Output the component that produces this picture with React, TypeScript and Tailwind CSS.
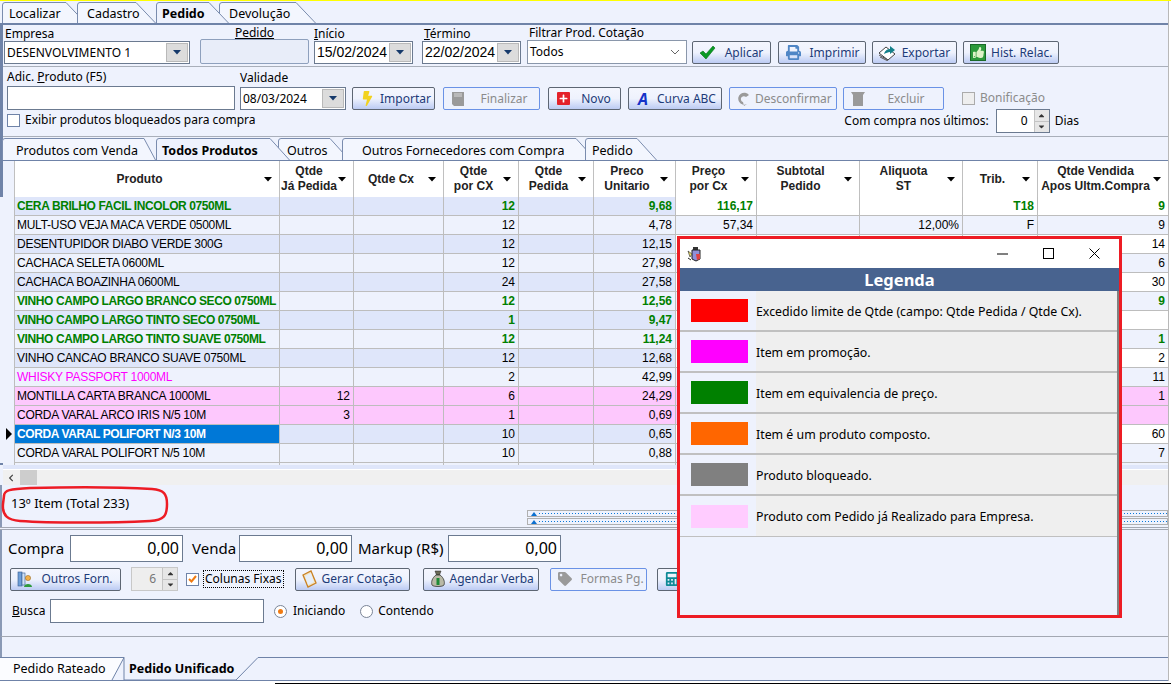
import React from "react";
import { FaPrint, FaBolt, FaThumbsUp, FaPlus, FaTag, FaCalculator, FaChevronLeft, FaCaretUp, FaCaretDown } from "react-icons/fa";

const gridCols = "grid grid-cols-[14px_265px_74px_90px_75px_75px_82px_81px_103px_103px_75px_131px]";

type Row = { name: string; a?: string; porCx: string; unit: string; cx?: string; al?: string; trib?: string; vend?: string; kind?: "green" | "promo" | "pink" | "sel" };

const rows: Row[] = [
  { name: "CERA BRILHO FACIL INCOLOR 0750ML", porCx: "12", unit: "9,68", cx: "116,17", trib: "T18", vend: "9", kind: "green" },
  { name: "MULT-USO VEJA MACA VERDE 0500ML", porCx: "12", unit: "4,78", cx: "57,34", al: "12,00%", trib: "F", vend: "9" },
  { name: "DESENTUPIDOR DIABO VERDE 300G", porCx: "12", unit: "12,15", vend: "14" },
  { name: "CACHACA SELETA 0600ML", porCx: "12", unit: "27,98", vend: "6" },
  { name: "CACHACA BOAZINHA 0600ML", porCx: "24", unit: "27,58", vend: "30" },
  { name: "VINHO CAMPO LARGO BRANCO SECO 0750ML", porCx: "12", unit: "12,56", vend: "9", kind: "green" },
  { name: "VINHO CAMPO LARGO TINTO SECO 0750ML", porCx: "1", unit: "9,47", kind: "green" },
  { name: "VINHO CAMPO LARGO TINTO SUAVE 0750ML", porCx: "12", unit: "11,24", vend: "1", kind: "green" },
  { name: "VINHO CANCAO BRANCO SUAVE 0750ML", porCx: "12", unit: "12,68", vend: "2" },
  { name: "WHISKY PASSPORT 1000ML", porCx: "2", unit: "42,99", vend: "11", kind: "promo" },
  { name: "MONTILLA CARTA BRANCA 1000ML", a: "12", porCx: "6", unit: "24,29", vend: "1", kind: "pink" },
  { name: "CORDA VARAL ARCO IRIS N/5 10M", a: "3", porCx: "1", unit: "0,69", kind: "pink" },
  { name: "CORDA VARAL POLIFORT N/3 10M", porCx: "10", unit: "0,65", vend: "60", kind: "sel" },
  { name: "CORDA VARAL POLIFORT N/5 10M", porCx: "10", unit: "0,88", vend: "7" },
];

const headers = [
  ["Produto"], ["Qtde", "Já Pedida"], ["Qtde Cx"], ["Qtde", "por CX"], ["Qtde", "Pedida"], ["Preco", "Unitario"],
  ["Preço", "por Cx"], ["Subtotal", "Pedido"], ["Aliquota", "ST"], ["Trib."], ["Qtde Vendida", "Apos Ultm.Compra"],
];

const legend = [
  ["bg-[#ff0000]", "Excedido limite de Qtde (campo: Qtde Pedida / Qtde Cx)."],
  ["bg-[#ff00ff]", "Item em promoção."],
  ["bg-[#008000]", "Item em equivalencia de preço."],
  ["bg-[#ff6600]", "Item é um produto composto."],
  ["bg-[#808080]", "Produto bloqueado."],
  ["bg-[#ffccff]", "Produto com Pedido já Realizado para Empresa."],
];

function Tab({ w, run = 20, label, textX, active, className = "", h = 23, top = 5 }: { w: number; run?: number; label: string; textX: number; active?: boolean; className?: string; h?: number; top?: number }) {
  const d = `M0.5,${h} L0.5,4 Q0.5,1.5 3,1.5 L${w - run},1.5 L${w - 0.5},${h}`;
  return (
    <div className={`relative shrink-0 ${active ? "z-10 font-bold" : ""} ${className}`} style={{ width: w, height: h }}>
      <svg className="absolute inset-0" width={w} height={h}>
        <path d={d} fill={active ? "#eef2fd" : "#f3f6fe"} stroke="#7a8cae" />
      </svg>
      <span className="absolute text-[12.5px] leading-[18px] whitespace-nowrap" style={{ left: textX, top }}>{label}</span>
    </div>
  );
}

function Arrow({ dark }: { dark?: boolean }) {
  return (
    <svg width="8" height="5" className="shrink-0"><path d="M0,0 H8 L4,4.5 Z" fill={dark ? "#000" : "#163a6b"} /></svg>
  );
}

function Combo({ text, className, big }: { text: string; className: string; big?: boolean }) {
  return (
    <div className={`flex items-center bg-white border border-[#6b7a90] pl-0.5 ${className}`}>
      <span className={`flex-1 whitespace-nowrap ${big ? "text-[14px] [font-family:'Liberation_Sans',sans-serif]" : "text-[12px]"}`}>{text}</span>
      <span className="flex items-center justify-center w-[22px] h-[calc(100%-2px)] mr-px bg-[#dcdcdc] border border-[#b9b9b9]">
        <Arrow />
      </span>
    </div>
  );
}

function Btn({ icon, label, className, off, tx = "justify-center" }: { icon: React.ReactNode; label: string; className: string; off?: boolean; tx?: string }) {
  return (
    <div
      className={`flex items-center h-[23px] gap-[7px] px-[5px] rounded-[2px] shrink-0 text-[12px] whitespace-nowrap ${
        off
          ? "border border-[#6a92e6] bg-[#eef2fd] text-[#8b8b8b]"
          : "border border-[#5d6673] bg-gradient-to-b from-[#f4f6fe] via-[#eef2fd] to-[#bccbf3] text-[#1d3b78]"
      } ${className}`}
    >
      <span className="w-[18px] flex justify-center shrink-0">{icon}</span>
      <span className={`flex-1 flex ${tx}`}>{label}</span>
    </div>
  );
}

function Spin({ value, className, off }: { value: string; className: string; off?: boolean }) {
  return (
    <div className={`flex items-center h-[24px] border ${off ? "border-[#c8c8c8] bg-[#eeeeee] text-[#777]" : "border-[#6b7a90] bg-white"} ${className}`}>
      <span className="flex-1 text-right pr-[6px] text-[12px]">{value}</span>
      <span className="flex flex-col w-[15px] h-full border-l border-[#c4c4c4] bg-[#e6e6e6] text-[#333]">
        <span className="flex-1 flex items-center justify-center border-b border-[#c4c4c4]"><FaCaretUp size={9} /></span>
        <span className="flex-1 flex items-center justify-center"><FaCaretDown size={9} /></span>
      </span>
    </div>
  );
}

function Money({ label, labelClass }: { label: string; labelClass: string }) {
  return (
    <>
      <span className={`text-[15px] whitespace-nowrap ${labelClass}`}>{label}</span>
      <div className="w-[113px] h-[27px] bg-white border border-[#6b7a90] text-right pr-[3px] text-[16px] leading-[24px]">0,00</div>
    </>
  );
}

function cellBg(r: Row, i: number, col: number) {
  if (r.kind === "pink") return "bg-[#fdc8fd]";
  if (r.kind === "sel" && col === 0) return "bg-[#0078d7]";
  const odd = i % 2 === 0;
  if (col < 6) return odd ? "bg-[#dfe6fa]" : "bg-[#eef2fd]";
  return odd ? "bg-white" : "bg-[#eef2fd]";
}

function nameClass(r: Row) {
  if (r.kind === "sel") return "text-white font-bold tracking-[-0.4px]";
  if (r.kind === "green") return "text-[#008000] font-bold tracking-[-0.4px]";
  if (r.kind === "promo") return "text-[#ff00ff] tracking-[-0.27px]";
  return "text-black tracking-[-0.27px]";
}

function GridRow({ r, i }: { r: Row; i: number }) {
  const vals = [r.name, r.a, "", r.porCx, "", r.unit, r.cx, "", r.al, r.trib, r.vend];
  return (
    <div className={`${gridCols} h-[19px]`}>
      <div className="relative bg-[#eef2fd]">
        {r.kind === "sel" && (
          <svg width="7" height="12" className="absolute left-[6px] top-[3px]"><path d="M0,0 L6,6 L0,12 Z" fill="#000" /></svg>
        )}
      </div>
      {vals.map((v, c) => (
        <div
          key={c}
          className={`border-l border-b border-[#bdbdbd] leading-[18px] overflow-hidden whitespace-nowrap ${cellBg(r, i, c)} ${
            c === 0 ? `text-left pl-[2px] ${nameClass(r)}` : `text-right pr-[3px] ${r.kind === "green" ? "text-[#008000] font-bold" : "text-black"}`
          }`}
        >
          {v}
        </div>
      ))}
    </div>
  );
}

function ModalIcon() {
  return (
    <svg width="16" height="16" viewBox="0 0 16 16">
      <rect x="6" y="1" width="5" height="3" fill="#333" />
      <path d="M5,4 H13 V13 L9,15 L5,13 Z" fill="#8f8fd8" stroke="#222" />
      <path d="M9,8 L13,8 V13 L10,14 Z" fill="#e04040" />
      <path d="M1,5 L5,8 L3,11 Z" fill="#f3e26b" stroke="#222" strokeWidth="0.6" />
      <path d="M1,12 L4,14" stroke="#222" />
    </svg>
  );
}

const CheckIcon = () => (
  <svg width="17" height="15" viewBox="0 0 17 15"><path d="M1,8 L4,6 L7,9 L14,1 L16,3 L7,14 Z" fill="#0a9a25" stroke="#06701a" strokeWidth="0.6" /></svg>
);

const ExportIcon = () => (
  <svg width="18" height="16" viewBox="0 0 18 16">
    <path d="M1,8 L8,2 L17,9 L10,15 Z" fill="#fff" stroke="#444" />
    <path d="M1,10 L10,15 M2,12 L10,16" stroke="#555" />
    <path d="M6,9 C7,5 10,4 12,4 V1 L17,5 L12,9 V7 C10,7 8,8 6,9 Z" fill="#14808a" />
  </svg>
);

const PeopleIcon = () => (
  <svg width="16" height="17" viewBox="0 0 16 17">
    <rect x="1" y="1" width="4" height="14" fill="#6f9fd8" stroke="#345a90" strokeWidth="0.6" />
    <rect x="5" y="2" width="3" height="12" fill="#cfe0f5" stroke="#345a90" strokeWidth="0.6" />
    <circle cx="11" cy="7" r="2.6" fill="#f3b04a" stroke="#8a5a10" strokeWidth="0.5" />
    <path d="M7,16 C7,12 15,12 15,16 Z" fill="#2e9a3c" />
  </svg>
);

const ClipIcon = () => (
  <svg width="15" height="18" viewBox="0 0 15 18">
    <path d="M1,5 L9,1 L14,13 L6,17 Z" fill="#f3e2bd" stroke="#c98224" strokeWidth="1.3" />
    <path d="M3,6 L9,3 L12,12 L6,15 Z" fill="#e6eef8" />
  </svg>
);

const BagIcon = () => (
  <svg width="16" height="18" viewBox="0 0 16 18">
    <path d="M5,1 H11 L9.5,5 H6.5 Z" fill="#6b6b58" stroke="#222" strokeWidth="0.5" />
    <path d="M6,5 H10 C14,8 15,12 14,15 C13,17 3,17 2,15 C1,12 2,8 6,5 Z" fill="#b9b9a6" stroke="#222" strokeWidth="0.7" />
    <rect x="6.5" y="8" width="3" height="7" fill="#1d8a36" />
  </svg>
);

const BookIcon = () => (
  <svg width="14" height="16" viewBox="0 0 14 16">
    <path d="M1,1 H13 V15 H3 L1,13 Z" fill="#9a9a9a" />
    <path d="M3,3 H11 M3,5 H11" stroke="#d8d8d8" />
  </svg>
);

export default function App() {
  return (
    <div className="relative w-[1171px] h-[684px] overflow-hidden bg-white text-black [font-family:'Noto_Sans',sans-serif]">
      <div className="w-[1169px] h-[681px] border-r border-[#b8b8b8] flex flex-col bg-[#eef2fd]">
        <div className="h-px bg-[#ffff00] w-[1171px] shrink-0" />

        {/* Main tabs */}
        <div className="flex items-end h-[22px] pl-[2px] shrink-0">
          <Tab h={22} top={4} w={84} label="Localizar" textX={7} />
          <Tab h={22} top={4} w={79} label="Cadastro" textX={10} className="-ml-[9px]" />
          <Tab h={22} top={4} w={73} label="Pedido" textX={6} active />
          <Tab h={22} top={4} w={97} label="Devolução" textX={10} className="-ml-[10px]" />
        </div>
        <div className="h-[2px] bg-[#6f83a8] shrink-0" />

        <div className="flex flex-col border-l-[3px] border-[#6f83a8] shrink-0">
          {/* Filter row */}
          <div className="flex items-end h-[42px] pb-[2px] pl-px border-b border-[#a9afba] text-[12px] shrink-0">
            <div className="flex flex-col w-[186px]">
              <span className="leading-[14px] pl-px">Empresa</span>
              <Combo text="DESENVOLVIMENTO 1" className="h-[23px]" />
            </div>
            <div className="flex flex-col items-center w-[109px] ml-[10px]">
              <span className="leading-[14px] underline -mb-px">Pedido</span>
              <div className="w-full h-[25px] border border-[#8ea0bd] rounded-[2px] bg-[#e8edf9]" />
            </div>
            <div className="flex flex-col w-[99px] ml-[5px]">
              <span className="leading-[14px]"><u>I</u>nício</span>
              <Combo text="15/02/2024" big className="h-[23px]" />
            </div>
            <div className="flex flex-col w-[99px] ml-[9px]">
              <span className="leading-[14px] pl-0.5"><u>T</u>érmino</span>
              <Combo text="22/02/2024" big className="h-[23px]" />
            </div>
            <div className="flex flex-col w-[160px] ml-[6px]">
              <span className="leading-[14px] pl-0.5">Filtrar Prod. Cotação</span>
              <div className="flex items-center justify-between h-[24px] bg-white border border-[#8a97ab] pl-0.5 pr-[6px]">
                <span>Todos</span>
                <svg width="10" height="6"><path d="M1,1 L5,5 L9,1" fill="none" stroke="#666" /></svg>
              </div>
            </div>
            <Btn className="w-[79px] ml-[5px]" label="Aplicar" icon={<CheckIcon />} />
            <Btn className="w-[88px] ml-[7px]" label="Imprimir" icon={<FaPrint size={15} className="text-[#4f86c6]" />} />
            <Btn className="w-[85px] ml-[6px] !gap-[5px]" label="Exportar" icon={<ExportIcon />} />
            <Btn className="w-[96px] ml-[6px] !gap-[4px]" tx="justify-start" label="Hist. Relac." icon={
              <span className="flex items-center justify-center w-[16px] h-[17px] bg-[#2d9a3c] border border-[#1a6a28]"><FaThumbsUp size={11} className="text-[#dff3c8]" /></span>
            } />
          </div>

          {/* Add product row */}
          <div className="flex flex-col h-[70px] border-b border-[#a9afba] pl-1 text-[12px] shrink-0">
            <div className="flex items-end h-[43px]">
              <div className="flex flex-col w-[228px]">
                <span className="leading-[15px] mb-[2px]">Adic. <u>P</u>roduto (F5)</span>
                <div className="h-[24px] bg-white border border-[#6b7a90]" />
              </div>
              <div className="flex flex-col w-[106px] ml-[5px]">
                <span className="leading-[15px] mb-[2px]">Validade</span>
                <Combo text="08/03/2024" className="h-[23px]" />
              </div>
              <Btn className="w-[83px] ml-[6px] !gap-[4px]" label="Importar" tx="justify-start" icon={<FaBolt size={15} className="text-[#f2d21f]" />} />
              <Btn off className="w-[97px] ml-[8px]" label="Finalizar" icon={<BookIcon />} />
              <Btn className="w-[73px] ml-[8px] !gap-[5px]" label="Novo" icon={
                <span className="flex items-center justify-center w-[13px] h-[13px] bg-[#e4222a] rounded-[1px]"><FaPlus size={9} className="text-white" /></span>
              } />
              <Btn className="w-[94px] ml-[7px] !gap-[5px]" label="Curva ABC" tx="justify-start" icon={<span className="text-[16px] leading-none font-bold italic text-[#1432c8]">A</span>} />
              <Btn off className="w-[108px] ml-[7px] !gap-[2px]" label="Desconfirmar" icon={
                <svg width="14" height="16"><path d="M12,4 A6,6 0 1 0 10,13 L7,15 L6,11 A3,3 0 1 1 9,6 Z" fill="#9a9a9a" /></svg>
              } />
              <Btn off className="w-[101px] ml-[6px]" label="Excluir" icon={
                <svg width="16" height="16"><path d="M1,1 H15 L13,4 V15 H3 V4 Z" fill="#9a9a9a" /></svg>
              } />
              <div className="flex items-center self-start mt-[22px] ml-[18px] text-[#8b8b8b] text-[12px]">
                <span className="w-[13px] h-[13px] border border-[#ababab] bg-[#eeeeee] mr-[5px]" />
                Bonificação
              </div>
            </div>
            <div className="flex items-start">
              <div className="flex items-center mt-px">
                <span className="w-[13px] h-[13px] border border-[#6f83a8] bg-white mr-[5px]" />
                Exibir produtos bloqueados para compra
              </div>
              <div className="flex items-center ml-auto mr-[89px] -mt-[1px]">
                <span className="mr-[7px]">Com compra nos últimos:</span>
                <Spin value="0" className="w-[54px]" />
                <span className="ml-[5px]">Dias</span>
              </div>
            </div>
          </div>

          {/* Sub tabs */}
          <div className="flex items-end h-[23px] shrink-0 -ml-[1px]">
            <Tab w={154} run={12} label="Produtos com Venda" textX={14} />
            <Tab w={134} label="Todos Produtos" textX={6} active />
            <Tab w={72} label="Outros" textX={9} className="-ml-[12px]" />
            <Tab w={254} label="Outros Fornecedores com Compra" textX={20} className="-ml-[8px]" />
            <Tab w={72} label="Pedido" textX={7} className="-ml-[11px]" />
          </div>
          <div className="h-px bg-[#6f83a8] shrink-0" />

          {/* Grid */}
          <div className="-ml-[3px] [font-family:'Liberation_Sans',sans-serif] text-[12px]">
            <div className={`${gridCols} h-[36px] bg-white`}>
              <div className="border-l-[3px] border-[#6f83a8] bg-[#eef2fd]" />
              {headers.map((h, i) => (
                <div key={i} className="flex items-center border-l border-[#c0c0c0] pr-[7px] font-bold text-[#222] leading-[15px]">
                  <div className="flex-1 text-center whitespace-nowrap">
                    {h.map((l) => <div key={l}>{l}</div>)}
                  </div>
                  <Arrow dark />
                </div>
              ))}
            </div>
            {rows.map((r, i) => <GridRow key={r.name} r={r} i={i} />)}
            <div className={`${gridCols} h-[2px]`}>
              <div />
              {headers.map((h, i) => <div key={i} className="border-l border-[#bdbdbd]" />)}
            </div>
          </div>
        </div>

        {/* Horizontal scroll */}
        <div className="h-[4px] bg-[#dfe6fa] ml-[3px] shrink-0" />
        <div className="h-px bg-white ml-[3px] shrink-0" />
        <div className="flex items-center h-[15px] ml-[3px] bg-[#f0f0f0] shrink-0">
          <FaChevronLeft size={8} className="ml-[4px] text-[#444]" />
          <div className="ml-[5px] w-[17px] h-full bg-[#cdcdcd]" />
        </div>

        {/* Status */}
        <div className="flex justify-between items-end h-[42px] border-l-2 border-[#8a99b5] shrink-0">
          <span className="self-start mt-[9px] ml-[9px] text-[13px] leading-[18px]">13º Item (Total 233)</span>
          <div className="flex flex-col w-[641px] gap-px pb-[2px]">
            {[0, 1].map((k) => (
              <div key={k} className="flex items-center h-[7px] border border-[#b0b0b0] pl-[3px]">
                <svg width="6" height="4" className="shrink-0"><path d="M0,4 L3,0 L6,4 Z" fill="#0a6fd0" /></svg>
                <div className="flex-1 ml-[2px] h-px bg-[repeating-linear-gradient(90deg,#0a78d8_0_1px,transparent_1px_3px)]" />
              </div>
            ))}
          </div>
        </div>
        <div className="h-[3px] border-y border-[#a3a8b2] shrink-0" />

        {/* Totals and actions */}
        <div className="flex flex-col h-[107px] border-b border-[#a3a8b2] border-l-2 border-l-[#8a99b5] pl-[6px] text-[12px] shrink-0">
          <div className="flex items-center mt-[5px]">
            <Money label="Compra" labelClass="w-[62px]" />
            <Money label="Venda" labelClass="w-[47px] ml-[9px]" />
            <Money label="Markup (R$)" labelClass="w-[90px] ml-[6px]" />
          </div>
          <div className="flex items-center mt-[5px]">
            <Btn className="w-[111px] ml-[2px] !gap-[5px]" label="Outros Forn." icon={<PeopleIcon />} />
            <Spin off value="6" className="w-[47px] ml-[10px]" />
            <span className="flex items-center justify-center w-[13px] h-[13px] ml-[8px] border border-[#6f83a8] bg-white">
              <svg width="9" height="8"><path d="M1,4 L3.5,6.5 L8,1" fill="none" stroke="#f07a12" strokeWidth="2" /></svg>
            </span>
            <span className="ml-[4px] border border-dotted border-black leading-[16px] text-[12px] px-px">Colunas Fixas</span>
            <Btn className="w-[115px] ml-[11px] !gap-[3px]" tx="justify-start" label="Gerar Cotação" icon={<ClipIcon />} />
            <Btn className="w-[116px] ml-[13px] !gap-[3px]" tx="justify-start" label="Agendar Verba" icon={<BagIcon />} />
            <Btn off className="w-[97px] ml-[11px]" label="Formas Pg." icon={<FaTag size={14} className="text-[#9a9a9a]" />} />
            <Btn className="w-[60px] ml-[10px]" label="" icon={<FaCalculator size={14} className="text-[#0f8a96]" />} />
          </div>
          <div className="flex items-center mt-[8px]">
            <span className="ml-[4px] w-[38px]"><u>B</u>usca</span>
            <div className="w-[214px] h-[24px] bg-white border border-[#6b7a90]" />
            <span className="flex items-center justify-center w-[13px] h-[13px] ml-[10px] rounded-full border border-[#7a8496] bg-white">
              <span className="w-[5px] h-[5px] rounded-full bg-[#f07a12]" />
            </span>
            <span className="ml-[6px]">Iniciando</span>
            <span className="w-[13px] h-[13px] ml-[15px] rounded-full border border-[#7a8496] bg-white" />
            <span className="ml-[5px]">Contendo</span>
          </div>
        </div>

        <div className="h-[20px] border-l-2 border-[#8a99b5] shrink-0" />

        {/* Bottom tabs */}
        <div className="relative flex items-center h-[24px] shrink-0 text-[12.5px]">
          <svg className="absolute inset-0" width="1168" height="24">
            <path d="M0,0.5 H124 L112,23 H0 Z" fill="#fbfcff" />
            <path d="M0,0.5 H124 M258,0.5 H1168" stroke="#6f83a8" fill="none" />
            <path d="M112,23 L124,0.5 V23 H236 L258,0.5" stroke="#6f83a8" fill="none" />
            <path d="M0,23.5 H1168" stroke="#6f83a8" fill="none" />
          </svg>
          <span className="relative ml-[13px] w-[92px] whitespace-nowrap">Pedido Rateado</span>
          <span className="relative ml-[24px] font-bold">Pedido Unificado</span>
        </div>
      </div>
      <div className="ml-[275px] mt-[2px] h-px bg-black" />

      {/* Red annotation around the item counter */}
      <svg className="absolute left-0 top-[486px]" width="172" height="40">
        <path d="M4,10 C4,4 10,3 30,2 C70,1 120,1 152,3 C164,4 167,8 167,18 C167,30 164,34 150,35 C110,37 50,37 20,35 C8,34 2,30 3,18 Z" fill="none" stroke="#ed1c24" strokeWidth="2.5" />
      </svg>

      {/* Legenda window */}
      <div className="absolute left-[677px] top-[236px] w-[445px] h-[382px] border-[3px] border-[#ed1c24] bg-[#eef2fd] flex flex-col text-[12.35px]">
        <div className="flex items-center h-[29px] bg-white shrink-0 pl-[7px]">
          <ModalIcon />
          <div className="ml-auto flex items-center gap-[35px] pr-[19px]">
            <svg width="11" height="11"><path d="M0,6 H11" stroke="#000" /></svg>
            <svg width="11" height="11"><rect x="0.5" y="0.5" width="10" height="10" fill="none" stroke="#000" /></svg>
            <svg width="11" height="11"><path d="M0.5,0.5 L10.5,10.5 M10.5,0.5 L0.5,10.5" stroke="#000" /></svg>
          </div>
        </div>
        <div className="h-[23px] bg-[#48638f] text-white font-bold text-[16.5px] leading-[23px] text-center shrink-0">Legenda</div>
        <div className="flex flex-col flex-1 border-r-2 border-[#808080]">
          {legend.map(([c, t], i) => (
            <div key={t} className={`flex h-[41px] shrink-0 border-[#c0c0c0] ${i === 5 ? "border-b" : "border-b-2"}`}>
              <div className="flex items-center w-[76px] pl-[11px]">
                <div className={`w-[57px] h-[23px] ${c}`} />
              </div>
              <div className="flex-1 bg-[#efefef] flex items-center pt-[3px]">{t}</div>
            </div>
          ))}
        </div>
      </div>
    </div>
  );
}
